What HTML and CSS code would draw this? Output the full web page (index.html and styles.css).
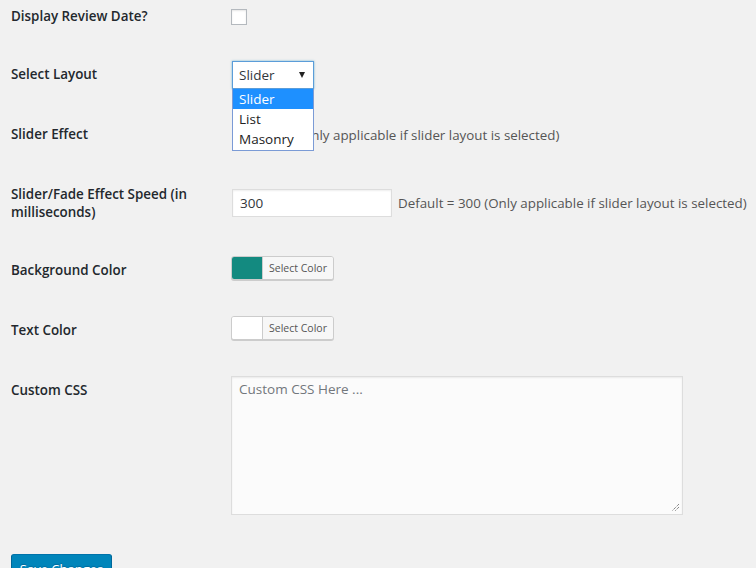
FILE: index.html
```html
<!DOCTYPE html>
<html>
<head>
<meta charset="utf-8">
<link rel="stylesheet" href="styles.css">
</head>
<body>
<div class="settings">
  <div class="row row-first">
    <div class="label">Display Review Date?</div>
    <div class="field field-top"><span class="checkbox"></span></div>
  </div>
  <div class="row">
    <div class="label">Select Layout</div>
    <div class="field">
      <div class="select-wrap">
        <div class="select focused"><span>Slider</span><span class="arrow"></span></div>
        <ul class="menu">
          <li class="active">Slider</li>
          <li>List</li>
          <li>Masonry</li>
        </ul>
      </div>
    </div>
  </div>
  <div class="row">
    <div class="label">Slider Effect</div>
    <div class="field">
      <div class="select select-effect"><span class="arrow"></span></div>
      <span class="desc">(Only applicable if slider layout is selected)</span>
    </div>
  </div>
  <div class="row">
    <div class="label label-tall">Slider/Fade Effect Speed (in milliseconds)</div>
    <div class="field">
      <div class="input">300</div>
      <span class="desc">Default = 300 (Only applicable if slider layout is selected)</span>
    </div>
  </div>
  <div class="row">
    <div class="label">Background Color</div>
    <div class="field">
      <div class="color-btn"><span class="swatch swatch-teal"></span><span class="color-text">Select Color</span></div>
    </div>
  </div>
  <div class="row">
    <div class="label">Text Color</div>
    <div class="field">
      <div class="color-btn"><span class="swatch swatch-white"></span><span class="color-text">Select Color</span></div>
    </div>
  </div>
  <div class="row">
    <div class="label">Custom CSS</div>
    <div class="field field-area">
      <div class="textarea">
        <span class="placeholder">Custom CSS Here ...</span>
        <svg class="grip" width="9" height="9" viewBox="0 0 9 9"><path d="M8 1L1 8M8 4L4 8" stroke="#555" stroke-width="1" stroke-dasharray="1 1" fill="none"/></svg>
      </div>
    </div>
  </div>
  <div class="submit">
    <span class="button-primary">Save Changes</span>
  </div>
</div>
</body>
</html>
```

FILE: styles.css
```css
html, body {
  margin: 0;
  padding: 0;
}
body {
  background: #f1f1f1;
  font-family: "Open Sans", "Noto Sans", sans-serif;
  font-size: 13px;
  color: #23282d;
  overflow: hidden;
}
.settings {
  display: flex;
  flex-direction: column;
}
.row {
  display: flex;
  min-height: 60px;
}
.row-first {
  min-height: 45px;
}
.label {
  width: 231px;
  flex: none;
  box-sizing: border-box;
  padding: 20px 20px 0 11px;
  font-weight: 600;
  font-size: 13.4px;
  line-height: 18px;
}
.row-first .label {
  padding-top: 7px;
}
.label-tall {
  padding-bottom: 20px;
}
.field {
  display: flex;
  align-items: center;
  flex: 1;
}
.field-top {
  align-items: flex-start;
  padding-top: 9px;
}
.checkbox {
  display: block;
  width: 16px;
  height: 16px;
  box-sizing: border-box;
  border: 1px solid #b4b9be;
  background: #fff;
  box-shadow: inset 0 1px 2px rgba(0,0,0,0.1);
}
.select-wrap {
  position: relative;
  margin-left: 1px;
}
.select {
  box-sizing: border-box;
  width: 82px;
  height: 28px;
  border: 1px solid #ddd;
  background: #fff;
  display: flex;
  align-items: center;
  justify-content: space-between;
  padding: 0 8px 0 6px;
  color: #32373c;
  font-size: 13.5px;
}
.select.focused {
  border-color: #5b9dd9;
  box-shadow: 0 0 2px rgba(30,140,190,0.6);
}
.select-effect {
  margin-left: 1px;
  width: 59px;
  justify-content: flex-end;
}
.arrow {
  width: 0;
  height: 0;
  border-left: 3.5px solid transparent;
  border-right: 3.5px solid transparent;
  border-top: 6px solid #222;
}
.menu {
  position: absolute;
  left: 0;
  top: 28px;
  width: 82px;
  box-sizing: border-box;
  margin: 0;
  padding: 0 0 1px;
  list-style: none;
  background: #fff;
  border: 1px solid #7b9bd6;
  border-top: none;
  z-index: 2;
  font-size: 13.5px;
}
.menu li {
  height: 20px;
  line-height: 21px;
  padding-left: 6px;
  color: #222;
}
.menu li.active {
  background: #1e90ff;
  color: #fff;
}
.desc {
  color: #555;
  margin-left: 6px;
  font-size: 13.35px;
}
.input {
  box-sizing: border-box;
  width: 160px;
  height: 28px;
  margin-left: 1px;
  border: 1px solid #ddd;
  background: #fff;
  box-shadow: inset 0 1px 2px rgba(0,0,0,0.07);
  padding-left: 7px;
  line-height: 26px;
  color: #32373c;
  font-size: 13.5px;
}
.color-btn {
  display: flex;
  box-sizing: border-box;
  width: 103px;
  height: 24px;
  margin-bottom: 6px;
  border: 1px solid #ccc;
  border-radius: 3px;
  background: #f7f7f7;
  box-shadow: 0 1px 0 #ccc;
  overflow: hidden;
}
.swatch {
  width: 30px;
  flex: none;
}
.swatch-teal {
  background: #138a80;
}
.swatch-white {
  background: #fff;
}
.color-text {
  flex: 1;
  border-left: 1px solid #ccc;
  background: #f7f7f7;
  color: #555;
  font-size: 10.5px;
  line-height: 22px;
  text-align: center;
}
.field-area {
  padding: 15px 0;
}
.textarea {
  position: relative;
  box-sizing: border-box;
  width: 452px;
  height: 139px;
  border: 1px solid #ddd;
  background: #fbfbfb;
  box-shadow: inset 0 1px 2px rgba(0,0,0,0.07);
  padding: 3px 7px;
}
.placeholder {
  color: #72777c;
  font-size: 13.5px;
  line-height: 18px;
}
.grip {
  position: absolute;
  right: 2px;
  bottom: 2px;
}
.submit {
  padding: 24px 0 0 11px;
}
.button-primary {
  display: inline-block;
  box-sizing: border-box;
  width: 101px;
  height: 30px;
  background: #0085ba;
  border: 1px solid #0073aa;
  border-color: #0073aa #006799 #006799;
  border-radius: 3px;
  box-shadow: 0 1px 0 #006799;
  color: #fff;
  text-align: center;
  line-height: 28px;
  font-size: 13px;
  text-shadow: 0 -1px 1px #006799;
}
```
